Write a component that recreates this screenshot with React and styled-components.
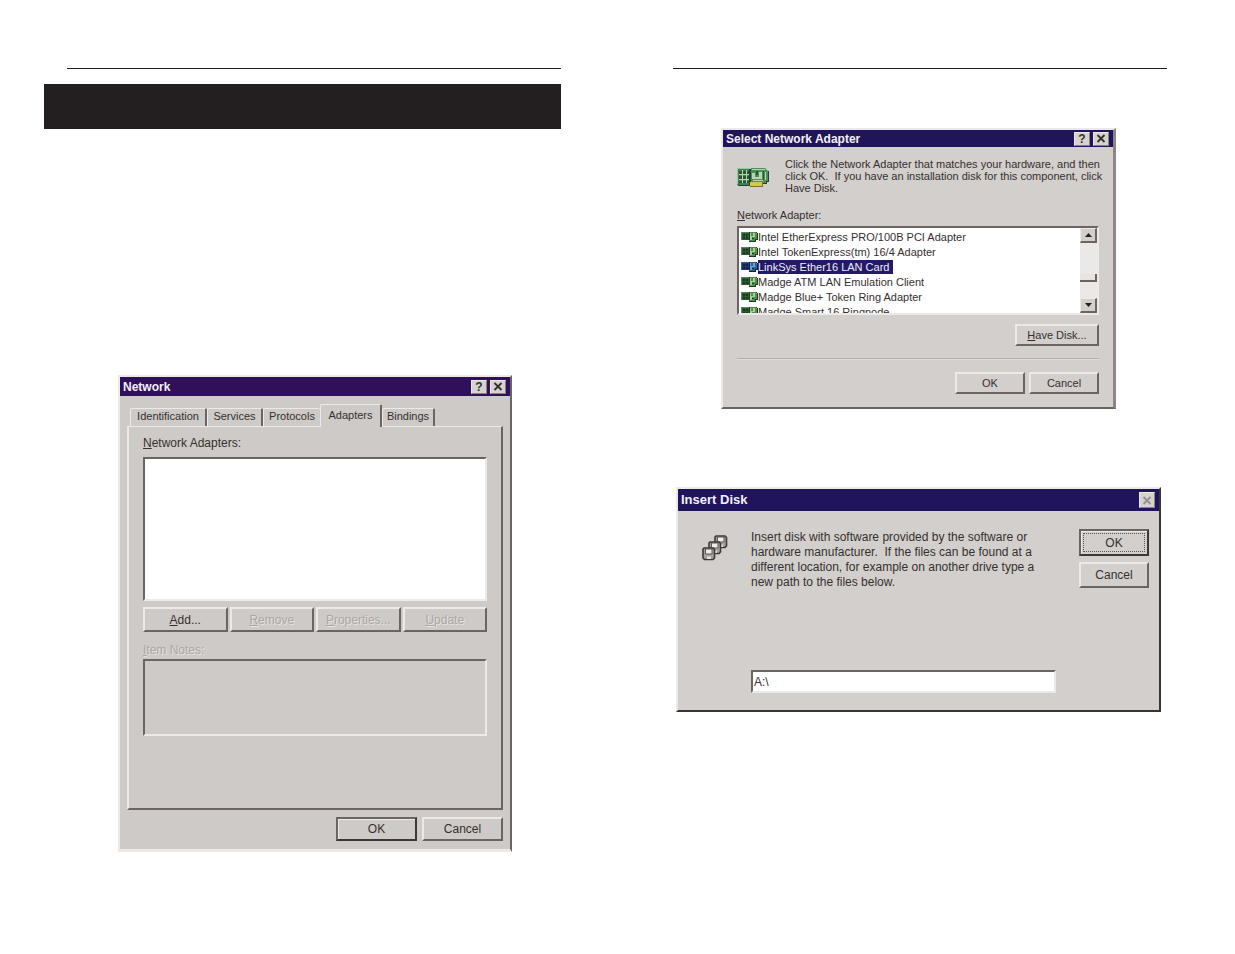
import React from "react";
import styled, { createGlobalStyle, css } from "styled-components";

const ink = "#35302f";
const light = "#ece9e6";
const dark = "#6b6462";

const GlobalStyle = createGlobalStyle`
  *, *::before, *::after { box-sizing: border-box; }
  body {
    margin: 0;
    background: #fff;
    color: ${ink};
    font-family: "Liberation Sans", Arial, sans-serif;
    font-size: 12px;
  }
  button, input, textarea { font: inherit; color: inherit; margin: 0; }
  p, ul, h2 { margin: 0; padding: 0; }
`;

const Spread = styled.main`
  display: grid;
  grid-template-columns: 517fr 494fr;
  column-gap: 112px;
  padding: 68px 68px 68px 44px;
`;

const Sheet = styled.section`
  display: flex;
  flex-direction: column;
  padding-left: ${(p) => (p.$inset ? "23px" : "0")};
`;

const Figures = styled.div`
  display: flex;
  flex-direction: column;
  padding: ${(p) => (p.$inset ? "0 0 0 2px" : "0 3px 0 0")};
`;

const Rule = styled.hr`
  width: 100%;
  height: 1px;
  margin: 0;
  border: 0;
  background: #231f20;
`;

const Band = styled.div`
  height: 45px;
  margin: 15px 0 0 -23px;
  background: #231f20;
`;

const Window = styled.section`
  display: flex;
  flex-direction: column;
  width: 100%;
  max-width: ${(p) => p.$width}px;
  margin: ${(p) => p.$top}px auto 0;
  background: ${(p) => p.$face};
  border-style: solid;
  border-color: ${light} ${(p) => p.$edge} ${(p) => p.$base} ${light};
  border-width: 2px ${(p) => p.$side}px ${(p) => p.$foot}px 2px;
`;

const TitleBar = styled.header`
  display: flex;
  align-items: center;
  gap: 3px;
  height: ${(p) => p.$height}px;
  padding: 0 4px 0 3px;
  background: ${(p) => p.$color};
  color: #f4f1f6;
`;

const Title = styled.h2`
  flex: 1;
  font-size: ${(p) => p.$size}px;
  line-height: 16px;
  font-weight: bold;
`;

const CaptionButton = styled.button`
  display: flex;
  align-items: center;
  justify-content: center;
  width: 16px;
  height: ${(p) => p.$height || 14}px;
  padding: 0;
  background: #d6d2ce;
  border: 1px solid;
  border-color: ${light} #8a8381 #8a8381 ${light};
  color: ${(p) => (p.disabled ? "#96908d" : ink)};
  font-size: 12px;
  line-height: 12px;
  font-weight: bold;
`;

const Key = styled.span`
  text-decoration: underline;
`;

const etched = css`
  color: #aca7a4;
  text-shadow: 1px 1px 0 #e6e3e0;
`;

const PushButton = styled.button`
  width: ${(p) => (p.$width ? `${p.$width}px` : "auto")};
  height: ${(p) => p.$height}px;
  padding: 0;
  background: transparent;
  border: 2px solid;
  border-color: ${light} ${dark} ${dark} ${light};
  line-height: 14px;
  ${(p) => p.$default && css`
    border-color: ${dark} #3d3735 #3d3735 ${dark};
    box-shadow: inset 1px 1px 0 ${light};
  `}
  ${(p) => p.$focus && css`
    outline: 1px dotted #5c5553;
    outline-offset: -5px;
  `}
  &:disabled { ${etched} }
`;

const sunken = css`
  border: 2px solid;
  border-color: ${dark} ${light} ${light} ${dark};
`;

const FieldLabel = styled.label`
  display: block;
  line-height: 14px;
  margin-top: ${(p) => p.$top}px;
  ${(p) => p.$muted && etched}
`;

/* Network window */

const NetworkBody = styled.div`
  padding: 8px 7px;
`;

const Tabs = styled.div`
  display: flex;
  align-items: flex-end;
  height: 22px;
  padding-left: 3px;
`;

const Tab = styled.button`
  width: ${(p) => p.$width}px;
  height: 18px;
  padding: 0 0 3px;
  text-align: center;
  white-space: nowrap;
  background: #cecac7;
  border: solid;
  border-width: 1px 2px 0 1px;
  border-color: ${light} ${dark} ${light} ${light};
  border-radius: 2px 2px 0 0;
  font-size: 11px;
  line-height: 14px;
  ${(p) => p.$joined && css`
    border-right-width: 0;
  `}
  ${(p) => p.$active && css`
    position: relative;
    height: 23px;
    margin-bottom: -1px;
  `}
`;

const TabPanel = styled.div`
  padding: 9px 14px 72px;
  border: solid;
  border-width: 1px 2px 2px 2px;
  border-color: ${light} ${dark} ${dark} ${light};
`;

const AdapterBox = styled.div`
  height: 144px;
  margin-top: 7px;
  background: #fff;
  ${sunken}
`;

const ButtonGrid = styled.div`
  display: grid;
  grid-template-columns: repeat(4, 1fr);
  gap: 2px;
  margin-top: 6px;
`;

const Notes = styled.textarea`
  display: block;
  width: 100%;
  height: 77px;
  margin-top: 2px;
  background: transparent;
  resize: none;
  ${sunken}
`;

const Footer = styled.footer`
  display: flex;
  justify-content: flex-end;
  gap: ${(p) => p.$gap}px;
  margin-top: ${(p) => p.$top}px;
`;

/* Select Network Adapter window */

const SelectBody = styled.div`
  padding: 11px 14px 13px;
  font-size: 11px;
`;

const Intro = styled.div`
  display: flex;
  gap: 15px;
`;

const IntroText = styled.p`
  line-height: 12px;
  white-space: nowrap;
`;

const CardIcon = styled.svg`
  flex: none;
  width: ${(p) => (p.$large ? 33 : 17)}px;
  height: ${(p) => (p.$large ? 22 : 11)}px;
  margin-top: ${(p) => (p.$large ? 9 : 0)}px;
`;

const ListFrame = styled.div`
  display: flex;
  height: 89px;
  margin-top: 4px;
  overflow: hidden;
  background: #fff;
  ${sunken}
`;

const List = styled.ul`
  flex: 1;
  padding: 1px 0 0 2px;
  list-style: none;
  overflow: hidden;
`;

const Row = styled.li`
  display: flex;
  align-items: center;
  height: 15px;
  line-height: 14px;
`;

const RowText = styled.span`
  padding-right: 4px;
  white-space: nowrap;
  ${(p) => p.$selected && css`
    background: #231a66;
    color: #f0eef6;
  `}
`;

const ScrollBar = styled.div`
  display: flex;
  flex-direction: column;
  width: 17px;
  background: #ebe9e7;
`;

const ScrollButton = styled.button`
  display: flex;
  align-items: center;
  justify-content: center;
  height: 15px;
  padding: 0;
  background: #d3cfcc;
  border: solid;
  border-width: 1px 2px 2px 1px;
  border-color: ${light} ${dark} ${dark} ${light};
`;

const Track = styled.div`
  flex: 1;
  padding-top: 31px;
`;

const Thumb = styled.div`
  height: 8px;
  background: #e6e3e1;
  border: solid;
  border-width: 0 2px 2px 0;
  border-color: ${dark};
`;

const Divider = styled.hr`
  height: 2px;
  margin: 12px 0;
  border: 0;
  border-top: 1px solid #b5b0ad;
  border-bottom: 1px solid #dedbd8;
`;

/* Insert Disk window */

const DiskBody = styled.div`
  display: grid;
  grid-template-columns: 26px 1fr 70px;
  column-gap: 23px;
  padding: 18px 10px 17px 24px;
`;

const DiskIcon = styled.svg`
  width: 26px;
  height: 26px;
  margin-top: 6px;
`;

const DiskText = styled.p`
  line-height: 15px;
  padding-top: 1px;
  white-space: nowrap;
`;

const ButtonStack = styled.div`
  display: flex;
  flex-direction: column;
  gap: 6px;
`;

const PathInput = styled.input`
  grid-column: 2;
  width: 100%;
  max-width: 306px;
  height: 23px;
  margin-top: 80px;
  padding: 0 1px;
  background: #fff;
  border-radius: 0;
  ${sunken}
`;

function Cross() {
  return (
    <svg width="10" height="9" viewBox="0 0 10 9" aria-hidden="true">
      <path d="M1.5 1 8.5 8M8.5 1 1.5 8" stroke="currentColor" strokeWidth="1.8" />
    </svg>
  );
}

function Arrow({ up }) {
  return (
    <svg width="7" height="4" viewBox="0 0 7 4" aria-hidden="true">
      <path d={up ? "M0 4 3.5 0 7 4Z" : "M0 0 3.5 4 7 0Z"} fill="#241f1e" />
    </svg>
  );
}

function LargeCard() {
  return (
    <CardIcon $large viewBox="0 0 33 22" aria-hidden="true">
      <path d="M0 1H13V18H0Z" fill="#3f8150" />
      <path d="M0 1H13V2H0ZM0 1H1V17H0Z" fill="#9cc79c" />
      <path d="M2 4H5V7H2ZM6 4H9V7H6ZM10 4H12V7H10ZM2 9H5V12H2ZM6 9H9V12H6ZM10 9H12V12H10ZM2 14H5V16H2ZM6 14H9V16H6ZM10 14H12V16H10Z" fill="#2a5435" />
      <path d="M2 7.500H12M2 12.500H12M5.500 3V16M9.500 3V16" stroke="#b6d6b2" />
      <path d="M1 18H14V19H1ZM12 2H14V18H12Z" fill="#22462c" />
      <path d="M14 1H28L31 4V14H29V16H14Z" fill="#4b9059" />
      <path d="M15 2H28V3H15ZM15 6H18V10H22V5H25V12H15Z" fill="#b4d8b0" />
      <path d="M19 4H21V8H19ZM26 4H27V13H26Z" fill="#2a5435" />
      <path d="M16 13H26V14H16ZM28 5H29V13H28Z" fill="#b4d8b0" />
      <path d="M31 4H32V15H30V17H26V16H29V14H31Z" fill="#22462c" />
      <path d="M13 15H25V19H13Z" fill="#d6c846" />
      <path d="M13 19H25V20H13ZM25 16H26V20H25Z" fill="#7b7030" />
    </CardIcon>
  );
}

function SmallCard({ selected }) {
  const board = selected ? "#1c3a6c" : "#2d5836";
  const bright = selected ? "#6fa3c4" : "#a8cf8c";
  const deep = selected ? "#151b50" : "#1d3a25";
  const mid = selected ? "#2c6396" : "#4f9052";
  return (
    <CardIcon viewBox="0 0 17 11" aria-hidden="true">
      <path d="M0 1H8V9H0Z" fill={board} />
      <path d="M0 1H8V2H0ZM0 1H1V9H0Z" fill={mid} />
      <path d="M2 3H4V5H2ZM5 3H7V5H5ZM2 6H4V8H2ZM5 6H7V8H5Z" fill={deep} />
      <path d="M8 1H15L16 3V8H14V10H8Z" fill={mid} />
      <path d="M9 2H10V5H12V2H14V6H11V9H9Z" fill={bright} />
      <path d="M15 1H16V8H14V10H8V11H15V9H17V2H15Z" fill={deep} />
      <path d="M8 1H9V9H8ZM11 7H13V8H11Z" fill={deep} />
    </CardIcon>
  );
}

function Disks() {
  return (
    <DiskIcon viewBox="0 0 26 26" aria-hidden="true">
      {[[12, 0], [6, 6], [0, 12]].map(([x, y]) => (
        <g key={x} transform={`translate(${x} ${y})`}>
          <path d="M2 1H11L12.500 2.500V11L11 12.500H2.500L1 11V2Z" fill="#a8a3a0" stroke="#3f3938" strokeWidth="1.600" />
          <path d="M3.500 2H10V7H3.500Z" fill="#efecea" stroke="#5a5452" />
          <path d="M5 9.500H9V12H5Z" fill="#e3dfdc" />
        </g>
      ))}
    </DiskIcon>
  );
}

const adapters = [
  "Intel EtherExpress PRO/100B PCI Adapter",
  "Intel TokenExpress(tm) 16/4 Adapter",
  "LinkSys Ether16 LAN Card",
  "Madge ATM LAN Emulation Client",
  "Madge Blue+ Token Ring Adapter",
  "Madge Smart 16 Ringnode",
];

const tabs = [
  ["Identification", 77],
  ["Services", 56],
  ["Protocols", 57],
  ["Adapters", 62],
  ["Bindings", 53],
];

function NetworkWindow() {
  return (
    <Window $width={394} $top={246} $face="#cecac7" $edge={dark} $base={light} $side={2} $foot={3}>
      <TitleBar $height={19} $color="#300f5b">
        <Title $size={12}>Network</Title>
        <CaptionButton aria-label="Help">?</CaptionButton>
        <CaptionButton aria-label="Close"><Cross /></CaptionButton>
      </TitleBar>
      <NetworkBody>
        <Tabs role="tablist">
          {tabs.map(([name, width]) => (
            <Tab
              key={name}
              role="tab"
              $width={width}
              $active={name === "Adapters"}
              $joined={name === "Protocols"}
              aria-selected={name === "Adapters"}
            >
              {name}
            </Tab>
          ))}
        </Tabs>
        <TabPanel role="tabpanel">
          <FieldLabel as="div" id="installed-label"><Key>N</Key>etwork Adapters:</FieldLabel>
          <AdapterBox role="listbox" aria-labelledby="installed-label" tabIndex={0} />
          <ButtonGrid>
            <PushButton $height={25}><Key>A</Key>dd...</PushButton>
            <PushButton $height={25} disabled><Key>R</Key>emove</PushButton>
            <PushButton $height={25} disabled><Key>P</Key>roperties...</PushButton>
            <PushButton $height={25} disabled><Key>U</Key>pdate</PushButton>
          </ButtonGrid>
          <FieldLabel htmlFor="notes" $top={11} $muted><Key>I</Key>tem Notes:</FieldLabel>
          <Notes id="notes" disabled />
        </TabPanel>
        <Footer $gap={5} $top={7}>
          <PushButton $width={81} $height={24} $default>OK</PushButton>
          <PushButton $width={81} $height={24}>Cancel</PushButton>
        </Footer>
      </NetworkBody>
    </Window>
  );
}

function SelectWindow() {
  return (
    <Window $width={395} $top={59} $face="#d3cfcc" $edge="#8d8684" $base={dark} $side={3} $foot={2}>
      <TitleBar $height={17} $color="#20145c">
        <Title $size={12}>Select Network Adapter</Title>
        <CaptionButton aria-label="Help">?</CaptionButton>
        <CaptionButton aria-label="Close"><Cross /></CaptionButton>
      </TitleBar>
      <SelectBody>
        <Intro>
          <LargeCard />
          <IntroText>
            Click the Network Adapter that matches your hardware, and then<br />
            click OK.&nbsp; If you have an installation disk for this component, click<br />
            Have Disk.
          </IntroText>
        </Intro>
        <FieldLabel as="div" id="choice-label" $top={14}><Key>N</Key>etwork Adapter:</FieldLabel>
        <ListFrame>
          <List role="listbox" aria-labelledby="choice-label">
            {adapters.map((name, i) => (
              <Row key={name} role="option" aria-selected={i === 2}>
                <SmallCard selected={i === 2} />
                <RowText $selected={i === 2}>{name}</RowText>
              </Row>
            ))}
          </List>
          <ScrollBar>
            <ScrollButton aria-label="Scroll up"><Arrow up /></ScrollButton>
            <Track><Thumb /></Track>
            <ScrollButton aria-label="Scroll down"><Arrow /></ScrollButton>
          </ScrollBar>
        </ListFrame>
        <Footer $top={9}>
          <PushButton $width={84} $height={22}><Key>H</Key>ave Disk...</PushButton>
        </Footer>
        <Divider />
        <Footer $gap={4} $top={0}>
          <PushButton $width={70} $height={22}>OK</PushButton>
          <PushButton $width={70} $height={22}>Cancel</PushButton>
        </Footer>
      </SelectBody>
    </Window>
  );
}

function DiskWindow() {
  return (
    <Window $width={485} $top={78} $face="#d3cfcc" $edge="#3a3534" $base="#3a3534" $side={2} $foot={2}>
      <TitleBar $height={22} $color="#20145c">
        <Title $size={13}>Insert Disk</Title>
        <CaptionButton $height={16} aria-label="Close" disabled><Cross /></CaptionButton>
      </TitleBar>
      <DiskBody>
        <Disks />
        <DiskText>
          Insert disk with software provided by the software or<br />
          hardware manufacturer.&nbsp; If the files can be found at a<br />
          different location, for example on another drive type a<br />
          new path to the files below.
        </DiskText>
        <ButtonStack>
          <PushButton $height={27} $default $focus>OK</PushButton>
          <PushButton $height={26}>Cancel</PushButton>
        </ButtonStack>
        <PathInput aria-label="Path" defaultValue="A:\" />
      </DiskBody>
    </Window>
  );
}

export default function App() {
  return (
    <>
      <GlobalStyle />
      <Spread>
        <Sheet $inset>
          <Rule />
          <Band />
          <Figures $inset>
            <NetworkWindow />
          </Figures>
        </Sheet>
        <Sheet>
          <Rule />
          <Figures>
            <SelectWindow />
            <DiskWindow />
          </Figures>
        </Sheet>
      </Spread>
    </>
  );
}
